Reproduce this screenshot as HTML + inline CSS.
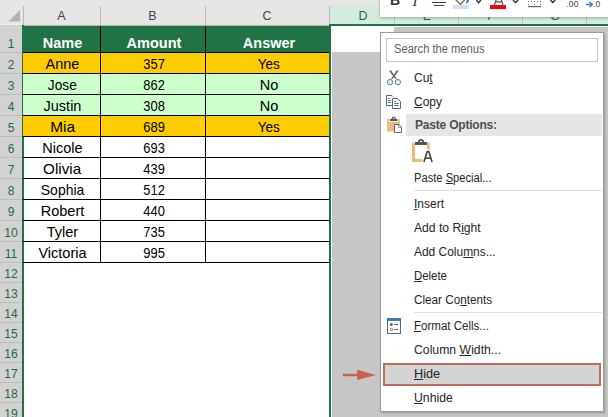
<!DOCTYPE html>
<html><head><meta charset="utf-8">
<style>
*{margin:0;padding:0;box-sizing:border-box}
html,body{width:608px;height:417px;overflow:hidden;background:#fff;font-family:"Liberation Sans",sans-serif}
.a{position:absolute}
.hl{position:absolute;background:#bababa;width:1px;top:6px;height:19px}
.ch{position:absolute;top:6px;height:18px;line-height:20px;text-align:center;font-size:12.5px;color:#444}
.chs{color:#1e6b45}
.rh{position:absolute;left:0;width:22px;text-align:center;font-size:12px;color:#1e6b45;border-bottom:1px solid #bdbdbd;line-height:14px}
.row{position:absolute;left:23px;width:307px;height:21px;border-bottom:1px solid #000}
.c{position:absolute;top:0;height:20px;text-align:center;font-size:14.5px;color:#000;line-height:23px;padding-left:2px}
.n{display:inline-block;transform:scaleX(.89)}
.cA{left:0;width:77px}
.cB{left:77px;width:105px;border-left:1px solid #000}
.cC{left:182px;width:125px;border-left:1px solid #000}
.mi{position:absolute;left:414px;font-size:12px;color:#262626;white-space:nowrap}
.mi u{text-decoration:underline;text-decoration-thickness:1px;text-underline-offset:1px}
</style></head><body>
<!-- top strip and column headers -->
<div class="a" style="left:0;top:0;width:608px;height:25px;background:#e6e6e6"></div>
<div class="a" style="left:0;top:24px;width:22px;height:1px;background:#efefef"></div>
<div class="a" style="left:23px;top:25px;width:307px;height:1px;background:#b8b3b6"></div>
<div class="a" style="left:330px;top:6px;width:278px;height:18px;background:#d3ecde"></div>
<div class="a" style="left:330px;top:24px;width:278px;height:2px;background:#217346"></div>
<svg class="a" style="left:0;top:0" width="23" height="24"><polygon points="8.5,21.5 20,10 20,21.5" fill="#b4b4b4"/></svg>
<div class="hl" style="left:23px"></div>
<div class="hl" style="left:100px"></div>
<div class="hl" style="left:205px"></div>
<div class="hl" style="left:329px"></div>
<div class="hl" style="left:394px;background:#b9c9c0;height:18px"></div>
<div class="hl" style="left:458px;background:#b9c9c0;height:18px"></div>
<div class="hl" style="left:522px;background:#b9c9c0;height:18px"></div>
<div class="hl" style="left:586px;background:#b9c9c0;height:18px"></div>
<div class="ch" style="left:23px;width:77px">A</div>
<div class="ch" style="left:100px;width:105px">B</div>
<div class="ch" style="left:205px;width:124px">C</div>
<div class="ch chs" style="left:331px;width:64px">D</div>
<div class="ch chs" style="left:395px;width:64px">E</div>
<div class="ch chs" style="left:459px;width:64px">F</div>
<div class="ch chs" style="left:523px;width:64px">G</div>

<!-- row headers -->
<div class="a" style="left:0;top:25px;width:22px;height:392px;background:#d2d2d2"></div>
<div class="rh" style="top:25px;height:28px"><span style="position:absolute;left:0;width:22px;top:12px">1</span></div>
<div class="rh" style="top:53px;height:21px"><span style="position:absolute;left:0;width:22px;top:5px">2</span></div>
<div class="rh" style="top:74px;height:21px"><span style="position:absolute;left:0;width:22px;top:5px">3</span></div>
<div class="rh" style="top:95px;height:21px"><span style="position:absolute;left:0;width:22px;top:5px">4</span></div>
<div class="rh" style="top:116px;height:21px"><span style="position:absolute;left:0;width:22px;top:5px">5</span></div>
<div class="rh" style="top:137px;height:21px"><span style="position:absolute;left:0;width:22px;top:5px">6</span></div>
<div class="rh" style="top:158px;height:21px"><span style="position:absolute;left:0;width:22px;top:5px">7</span></div>
<div class="rh" style="top:179px;height:21px"><span style="position:absolute;left:0;width:22px;top:5px">8</span></div>
<div class="rh" style="top:200px;height:21px"><span style="position:absolute;left:0;width:22px;top:5px">9</span></div>
<div class="rh" style="top:221px;height:21px"><span style="position:absolute;left:0;width:22px;top:5px">10</span></div>
<div class="rh" style="top:242px;height:21px"><span style="position:absolute;left:0;width:22px;top:5px">11</span></div>
<div class="rh" style="top:263px;height:20px"><span style="position:absolute;left:0;width:22px;top:4px">12</span></div>
<div class="rh" style="top:283px;height:20px"><span style="position:absolute;left:0;width:22px;top:4px">13</span></div>
<div class="rh" style="top:303px;height:20px"><span style="position:absolute;left:0;width:22px;top:4px">14</span></div>
<div class="rh" style="top:323px;height:20px"><span style="position:absolute;left:0;width:22px;top:4px">15</span></div>
<div class="rh" style="top:343px;height:20px"><span style="position:absolute;left:0;width:22px;top:4px">16</span></div>
<div class="rh" style="top:363px;height:20px"><span style="position:absolute;left:0;width:22px;top:4px">17</span></div>
<div class="rh" style="top:383px;height:20px"><span style="position:absolute;left:0;width:22px;top:4px">18</span></div>
<div class="rh" style="top:403px;height:20px"><span style="position:absolute;left:0;width:22px;top:4px">19</span></div>
<div class="a" style="left:22px;top:25px;width:2px;height:392px;background:#217346"></div>

<!-- table -->
<div class="row" style="top:26px;height:27px;background:#217346">
 <div class="c cA" style="height:26px;line-height:34px;color:#fff;font-weight:bold;font-size:14.5px">Name</div>
 <div class="c cB" style="height:26px;line-height:34px;color:#fff;font-weight:bold;font-size:14.5px">Amount</div>
 <div class="c cC" style="height:26px;line-height:34px;color:#fff;font-weight:bold;font-size:14.5px">Answer</div>
</div>
<div class="row" style="top:53px;background:#ffcc00"><div class="c cA">Anne</div><div class="c cB"><span class="n">357</span></div><div class="c cC"><span class="n" style="transform:scaleX(.93)">Yes</span></div></div>
<div class="row" style="top:74px;background:#ccffcc"><div class="c cA"><span class="n" style="transform:scaleX(.945)">Jose</span></div><div class="c cB"><span class="n">862</span></div><div class="c cC">No</div></div>
<div class="row" style="top:95px;background:#ccffcc"><div class="c cA">Justin</div><div class="c cB"><span class="n">308</span></div><div class="c cC">No</div></div>
<div class="row" style="top:116px;background:#ffcc00"><div class="c cA"><span class="n" style="transform:scaleX(1.06)">Mia</span></div><div class="c cB"><span class="n">689</span></div><div class="c cC"><span class="n" style="transform:scaleX(.93)">Yes</span></div></div>
<div class="row" style="top:137px"><div class="c cA">Nicole</div><div class="c cB"><span class="n">693</span></div><div class="c cC"></div></div>
<div class="row" style="top:158px"><div class="c cA"><span class="n" style="transform:scaleX(1.05)">Olivia</span></div><div class="c cB"><span class="n">439</span></div><div class="c cC"></div></div>
<div class="row" style="top:179px"><div class="c cA"><span class="n" style="transform:scaleX(.965)">Sophia</span></div><div class="c cB"><span class="n">512</span></div><div class="c cC"></div></div>
<div class="row" style="top:200px"><div class="c cA">Robert</div><div class="c cB"><span class="n">440</span></div><div class="c cC"></div></div>
<div class="row" style="top:221px"><div class="c cA">Tyler</div><div class="c cB"><span class="n">735</span></div><div class="c cC"></div></div>
<div class="row" style="top:242px"><div class="c cA">Victoria</div><div class="c cB"><span class="n">995</span></div><div class="c cC"></div></div>

<!-- selection D+ -->
<div class="a" style="left:329px;top:24px;width:2px;height:393px;background:#217346"></div>
<div class="a" style="left:332px;top:52px;width:276px;height:365px;background:#c6c6c6"></div>
<div class="a" style="left:394px;top:27px;width:214px;height:26px;background:#c6c6c6"></div>

<!-- mini toolbar -->
<div class="a" style="left:380px;top:-4px;width:240px;height:20.5px;background:#fff;box-shadow:0 1px 3px rgba(0,0,0,.28)"></div>
<div class="a" style="left:390px;top:-7px;font:bold 14px 'Liberation Sans';color:#333;line-height:14px">B</div>
<div class="a" style="left:412.5px;top:-6px;font:italic 15px 'Liberation Serif';color:#333;line-height:14px">I</div>
<svg class="a" style="left:0;top:0" width="608" height="20">
 <rect x="432" y="2" width="14" height="1" fill="#444"/>
 <rect x="434" y="5" width="10" height="1" fill="#444"/>
 <path d="M455,-1 L460.5,4.4 L465.5,-1" fill="none" stroke="#555" stroke-width="1.1"/>
 <path d="M466,4.2 L466.3,1.5 L467.5,-1 L469.2,-1 L468.8,1.5 Z" fill="#3b78c2"/>
 <rect x="453" y="5" width="16" height="4" fill="#d3def2"/>
 <path d="M476.3,0 L478.6,2.6 L480.9,0" fill="none" stroke="#333" stroke-width="1.4"/>
 <path d="M494.5,4.8 L497.5,-4 L500,-4 L503,4.8 M495.8,1.8 L501.7,1.8" fill="none" stroke="#555" stroke-width="1.2"/>
 <rect x="490" y="5" width="16" height="4" fill="#ff0000"/>
 <path d="M512.9,0 L515.6,2.6 L518.3,0" fill="none" stroke="#333" stroke-width="1.4"/>
 <g fill="#777"><rect x="528" y="1" width="1" height="1"/><rect x="531" y="1" width="1" height="1"/><rect x="534" y="1" width="1" height="1"/><rect x="537" y="1" width="1" height="1"/><rect x="540" y="1" width="1" height="1"/>
 <rect x="528" y="4" width="1" height="1"/><rect x="534" y="4" width="1" height="1"/><rect x="540" y="4" width="1" height="1"/></g>
 <rect x="528" y="6" width="13" height="1.2" fill="#666"/>
 <path d="M550.3,0 L552.8,2.6 L555.3,0" fill="none" stroke="#333" stroke-width="1.4"/>
 <path d="M586,4.5 L592,4.5 M589.5,2 L592.5,4.5 L589.5,7" fill="none" stroke="#3b78c2" stroke-width="1.3"/>
</svg>
<div class="a" style="left:566.3px;top:-0.5px;font:8.5px 'Liberation Sans';color:#444;line-height:9px;letter-spacing:0.2px">.00</div>
<div class="a" style="left:593px;top:-0.5px;font:8.5px 'Liberation Sans';color:#444;line-height:9px;letter-spacing:0.2px">.0</div>

<!-- context menu -->
<div class="a" style="left:380px;top:32px;width:224px;height:380px;background:#fff;border:1px solid #9a9a9a;box-shadow:1px 1px 2px rgba(0,0,0,.22)"></div>
<div class="a" style="left:386px;top:38px;width:212px;height:24px;border:1px solid #c6c6c6"></div>
<div class="mi" style="top:41.5px;left:393.5px;color:#606060;transform:scaleX(.93);transform-origin:0 0">Search the menus</div>
<div class="mi" style="top:71px">Cu<u>t</u></div>
<div class="mi" style="top:95px"><u>C</u>opy</div>
<div class="a" style="left:406px;top:114px;width:196px;height:22px;background:#e6e6e6"></div>
<div class="mi" style="top:118px;left:415px;font-weight:bold;color:#505050;letter-spacing:-0.2px">Paste Options:</div>
<div class="mi" style="top:171px;transform:scaleX(.93);transform-origin:0 0">Paste <u>S</u>pecial...</div>
<div class="a" style="left:414px;top:190px;width:188px;height:1px;background:#e1e1e1"></div>
<div class="mi" style="top:197px"><u>I</u>nsert</div>
<div class="mi" style="top:221px;transform:scaleX(1.01);transform-origin:0 0">Add to R<u>i</u>ght</div>
<div class="mi" style="top:245px;transform:scaleX(.995);transform-origin:0 0">Add Colu<u>m</u>ns...</div>
<div class="mi" style="top:269px;transform:scaleX(.95);transform-origin:0 0"><u>D</u>elete</div>
<div class="mi" style="top:293px;transform:scaleX(.977);transform-origin:0 0">Clear Co<u>n</u>tents</div>
<div class="a" style="left:414px;top:312px;width:188px;height:1px;background:#e1e1e1"></div>
<div class="mi" style="top:319px;transform:scaleX(.96);transform-origin:0 0"><u>F</u>ormat Cells...</div>
<div class="mi" style="top:343px;transform:scaleX(1.02);transform-origin:0 0">Column <u>W</u>idth...</div>
<div class="a" style="left:383px;top:363px;width:218px;height:23px;background:#d4d4d4;border:2px solid #c66b55"></div>
<div class="mi" style="top:367px;transform:scaleX(1.06);transform-origin:0 0"><u>H</u>ide</div>
<div class="mi" style="top:391px;transform:scaleX(1.02);transform-origin:0 0"><u>U</u>nhide</div>
<svg class="a" style="left:0;top:0" width="608" height="417">
 <!-- scissors -->
 <path d="M389,70.8 L391.2,70.4 L396.8,79 L395.8,79.6 Z" fill="#666"/><path d="M398.8,70.8 L396.6,70.4 L391,79 L392,79.6 Z" fill="#666"/>
 <circle cx="390" cy="82.1" r="2.6" stroke="#4176bd" stroke-width="1" fill="none"/>
 <circle cx="397.9" cy="82.1" r="2.6" stroke="#4176bd" stroke-width="1" fill="none"/>
 <!-- copy -->
 <path d="M392.5,105.5 L386.5,105.5 L386.5,95.5 L392,95.5 L393.2,96.7" stroke="#666" stroke-width="1" fill="none"/>
 <path d="M388,98.5 H390.2 M388,100.5 H391 M388,102.5 H391" stroke="#3f7bc4" stroke-width="1" fill="none"/>
 <path d="M392.5,98.5 H397.5 L400.5,101.5 V108.5 H392.5 Z" stroke="#666" stroke-width="1" fill="#fff"/>
 <path d="M394.2,101.5 H396.2 M394.2,103.5 H398.8 M394.2,105.5 H398.8" stroke="#3f7bc4" stroke-width="1" fill="none"/>
 <!-- small paste -->
 <rect x="387" y="118.8" width="12.8" height="12.7" fill="#e9bd7a"/>
 <rect x="389" y="118.8" width="9.4" height="3" fill="#fff"/>
 <rect x="390" y="119" width="7.4" height="2" fill="#555"/>
 <rect x="391.8" y="116.8" width="3.8" height="3" rx="1.2" fill="#555"/>
 <circle cx="393.7" cy="118.2" r="0.7" fill="#fff"/>
 <path d="M394.5,124.5 H398.8 L401.5,127.2 V132.5 H394.5 Z" stroke="#666" stroke-width="1" fill="#fff"/><path d="M398.5,124.8 V127.5 H401.2" stroke="#888" stroke-width=".8" fill="none"/>
 <!-- big paste -->
 <path d="M413.4,142.5 V160.4 H422.3" stroke="#e9bd7a" stroke-width="3" fill="none"/>
 <path d="M428.4,142.5 V149.5" stroke="#e9bd7a" stroke-width="2.8" fill="none"/>
 <rect x="415" y="142" width="12" height="3" fill="#555"/>
 <circle cx="421" cy="142" r="2.2" fill="none" stroke="#555" stroke-width="1.8"/>
 
 <path d="M423.9,162 L427.2,151.6 H428.8 L432.1,162 M425.4,158.3 H430.6" stroke="#444" stroke-width="1.6" fill="none"/>
 <!-- format cells -->
 <rect x="387.5" y="318.5" width="13" height="15" stroke="#666" stroke-width="1" fill="#fff"/>
 <rect x="387" y="318" width="14" height="3" fill="#3f7bc4"/>
 <circle cx="391.4" cy="324.5" r="1.5" fill="#666"/>
 <circle cx="391.4" cy="329.5" r="1.2" fill="none" stroke="#666" stroke-width=".9"/>
 <path d="M394,324.5 H398 M394,329.5 H398" stroke="#666" stroke-width="1"/>
 <!-- arrow -->
 <path d="M343,375 H358" stroke="#c9614e" stroke-width="2.5"/>
 <path d="M357.2,369.8 L376,375 L357.2,379.9 Z" fill="#c9614e"/>
</svg>
</body></html>
